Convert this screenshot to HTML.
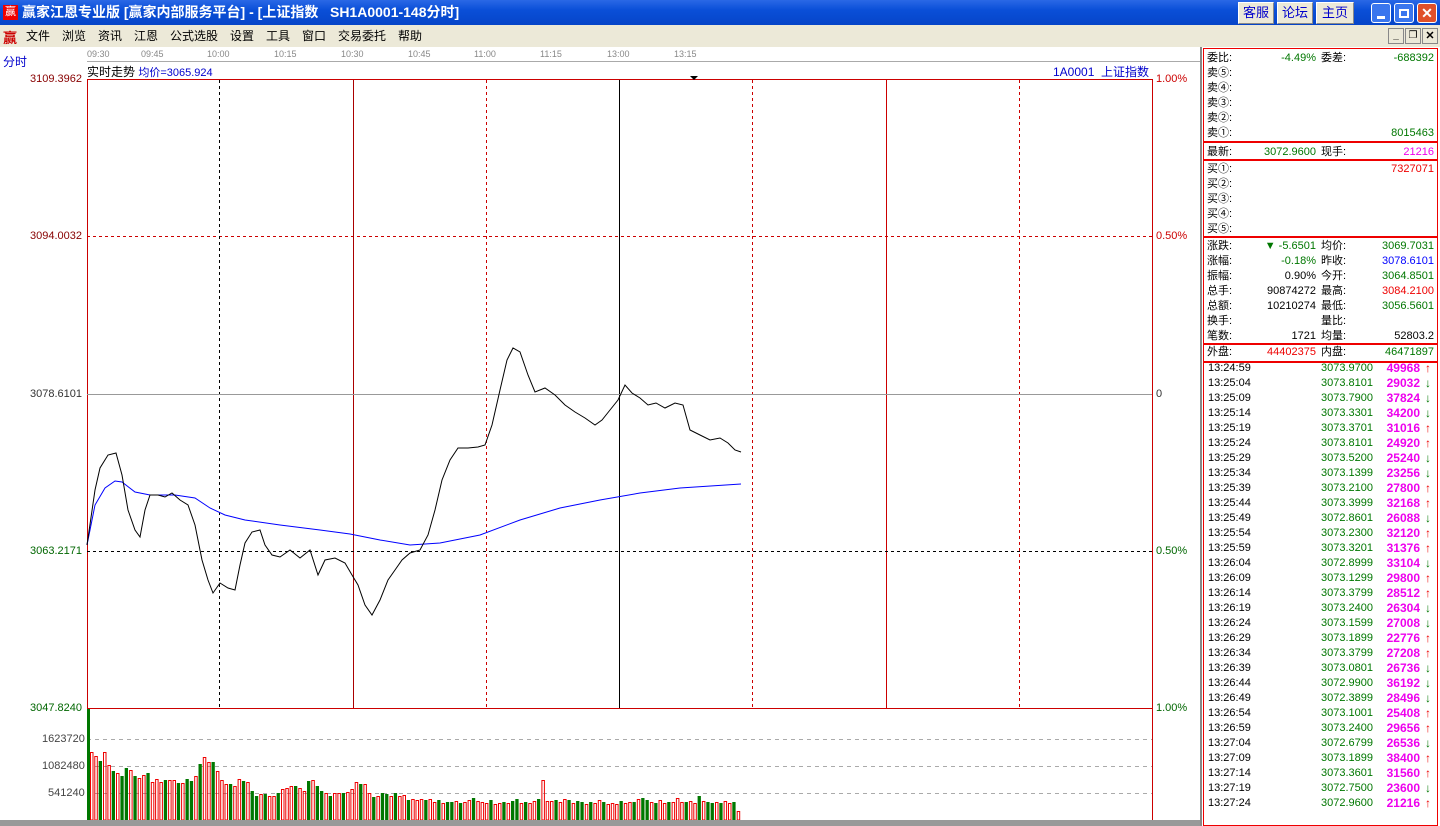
<!DOCTYPE html>
<html><head><meta charset="utf-8"><style>
*{margin:0;padding:0;box-sizing:border-box}
body{width:1440px;height:826px;overflow:hidden;background:#fff;font-family:"Liberation Sans","Noto Sans CJK SC","WenQuanYi Zen Hei",sans-serif;font-size:12px;position:relative}
.a{position:absolute;white-space:nowrap}
#title{left:0;top:0;width:1440px;height:25px;background:linear-gradient(#2a68e6,#0a4fd8 40%,#0645c8);color:#fff;font-weight:bold;font-size:14px;line-height:25px;padding-left:22px}
.tb{top:2px;height:22px;background:#ece9d8;border:1px solid #fff;border-right-color:#888;border-bottom-color:#888;color:#00c;font-size:13px;text-align:center;line-height:19px}
.wb{top:3px;width:20px;height:20px;border:1px solid #fff;border-radius:3px;background:#3a76ee}
#menu{left:0;top:25px;width:1440px;height:22px;background:#ece9d8;font-size:12px;line-height:22px}
.mi{top:25px;line-height:22px;font-size:12px}
.ax{color:#888;font-size:9px;top:49px}
.rp{font-size:11px;line-height:15px}
.box{position:absolute;border:1px solid #e00;left:1203px;width:235px}
</style></head><body>
<div id="title" class="a">赢家江恩专业版 [赢家内部服务平台] - [上证指数&nbsp;&nbsp;&nbsp;SH1A0001-148分时]</div>
<div class="a" style="left:3px;top:5px;width:15px;height:15px;background:#e00;color:#fff;font-size:11px;line-height:15px;text-align:center">赢</div>
<div class="a tb" style="left:1238px;width:36px">客服</div>
<div class="a tb" style="left:1277px;width:36px">论坛</div>
<div class="a tb" style="left:1316px;width:38px">主页</div>
<div class="a wb" style="left:1371px"><div class="a" style="left:5px;top:12px;width:8px;height:3px;background:#fff"></div></div>
<div class="a wb" style="left:1394px"><div class="a" style="left:4px;top:5px;width:10px;height:9px;border:2px solid #fff"></div></div>
<div class="a wb" style="left:1417px;background:#e0502a;color:#fff;font-weight:bold;text-align:center;line-height:18px;font-size:14px">✕</div>
<div id="menu" class="a"></div>
<div class="a" style="left:3px;top:28px;color:#c00;font-size:14px;font-weight:bold">赢</div>
<div class="a mi" style="left:26px">文件</div><div class="a mi" style="left:62px">浏览</div><div class="a mi" style="left:98px">资讯</div><div class="a mi" style="left:134px">江恩</div><div class="a mi" style="left:170px">公式选股</div><div class="a mi" style="left:230px">设置</div><div class="a mi" style="left:266px">工具</div><div class="a mi" style="left:302px">窗口</div><div class="a mi" style="left:338px">交易委托</div><div class="a mi" style="left:398px">帮助</div>
<div class="a" style="left:1388px;top:28px;width:16px;height:16px;border:1px solid #888;background:#ece9d8;font-size:10px;text-align:center;line-height:14px;font-weight:bold">_</div>
<div class="a" style="left:1405px;top:28px;width:16px;height:16px;border:1px solid #888;background:#ece9d8;font-size:10px;text-align:center;line-height:14px">❐</div>
<div class="a" style="left:1422px;top:28px;width:16px;height:16px;border:1px solid #888;background:#ece9d8;font-size:11px;text-align:center;line-height:14px;font-weight:bold">✕</div>
<div class="a" style="left:1200px;top:47px;width:2px;height:779px;background:#888"></div>
<div class="a" style="left:87px;top:61px;width:1113px;height:1px;background:#aaa"></div>
<div class="a ax" style="left:87px">09:30</div><div class="a ax" style="left:141px">09:45</div><div class="a ax" style="left:207px">10:00</div><div class="a ax" style="left:274px">10:15</div><div class="a ax" style="left:341px">10:30</div><div class="a ax" style="left:408px">10:45</div><div class="a ax" style="left:474px">11:00</div><div class="a ax" style="left:540px">11:15</div><div class="a ax" style="left:607px">13:00</div><div class="a ax" style="left:674px">13:15</div>
<div class="a" style="left:3px;top:53px;color:#00c;font-size:12px">分时</div>
<div class="a" style="left:87px;top:63px;font-size:12px">实时走势 <span style="color:#00c;font-size:11px">均价=3065.924</span></div>
<div class="a" style="left:1053px;top:63px;color:#00c;font-size:12px">1A0001&nbsp;&nbsp;上证指数</div>
<div class="a" style="left:30px;top:73px;color:#800;font-size:11px">3109.3962</div>
<div class="a" style="left:30px;top:230px;color:#800;font-size:11px">3094.0032</div>
<div class="a" style="left:30px;top:388px;color:#333;font-size:11px">3078.6101</div>
<div class="a" style="left:30px;top:545px;color:#060;font-size:11px">3063.2171</div>
<div class="a" style="left:30px;top:702px;color:#060;font-size:11px">3047.8240</div>
<div class="a" style="left:42px;top:733px;color:#444;font-size:11px">1623720</div>
<div class="a" style="left:42px;top:760px;color:#444;font-size:11px">1082480</div>
<div class="a" style="left:48px;top:787px;color:#444;font-size:11px">541240</div>
<div class="a" style="left:1156px;top:73px;color:#c00;font-size:11px">1.00%</div>
<div class="a" style="left:1156px;top:230px;color:#c00;font-size:11px">0.50%</div>
<div class="a" style="left:1156px;top:388px;color:#333;font-size:11px">0</div>
<div class="a" style="left:1156px;top:545px;color:#060;font-size:11px">0.50%</div>
<div class="a" style="left:1156px;top:702px;color:#060;font-size:11px">1.00%</div>
<svg class="a" style="left:0;top:0" width="1200" height="826">
<g stroke="#c00" stroke-width="1" fill="none" shape-rendering="crispEdges">
<rect x="87.5" y="79.5" width="1065" height="629"/>
<line x1="87" y1="236.5" x2="1152" y2="236.5" stroke-dasharray="3,3"/>
<line x1="219.5" y1="80" x2="219.5" y2="708" stroke="#000" stroke-dasharray="3,3"/>
<line x1="353.5" y1="80" x2="353.5" y2="708" stroke="#a00"/>
<line x1="486.5" y1="80" x2="486.5" y2="708" stroke-dasharray="3,3"/>
<line x1="619.5" y1="80" x2="619.5" y2="708" stroke="#000"/>
<line x1="752.5" y1="80" x2="752.5" y2="708" stroke-dasharray="3,3"/>
<line x1="886.5" y1="80" x2="886.5" y2="708"/>
<line x1="1019.5" y1="80" x2="1019.5" y2="708" stroke-dasharray="3,3"/>
<line x1="87" y1="394.5" x2="1152" y2="394.5" stroke="#999"/>
<line x1="87" y1="551.5" x2="1152" y2="551.5" stroke="#000" stroke-dasharray="3,3"/>
<line x1="87" y1="739.5" x2="1152" y2="739.5" stroke="#aaa" stroke-dasharray="4,4"/>
<line x1="87" y1="766.5" x2="1152" y2="766.5" stroke="#aaa" stroke-dasharray="4,4"/>
<line x1="87" y1="793.5" x2="1152" y2="793.5" stroke="#aaa" stroke-dasharray="4,4"/>
<line x1="87.5" y1="708" x2="87.5" y2="820"/>
<line x1="1152.5" y1="708" x2="1152.5" y2="820"/>
</g>
<polygon points="690,76 698,76 694,80" fill="#000"/>
<polyline fill="none" stroke="#00f" stroke-width="1" points="87,545 95,505 105,488 115,481 122,482 135,492 150,495 175,495 195,498 210,508 225,515 245,520 280,525 320,530 350,534 380,540 410,545 440,543 480,535 520,520 560,508 600,500 640,493 680,488 741,484"/>
<polyline fill="none" stroke="#000" stroke-width="1" points="87,545 95,490 100,468 108,455 116,453 122,475 128,510 135,530 140,537 145,510 150,495 158,495 165,497 172,493 180,500 188,505 195,525 202,560 208,580 213,593 220,583 228,588 235,590 240,565 245,543 252,532 260,530 265,545 272,555 280,557 290,550 300,558 310,550 318,575 325,560 335,558 345,563 352,575 358,585 365,605 372,615 380,600 388,580 395,570 402,560 410,553 420,550 428,535 435,510 442,480 450,460 458,448 468,448 478,447 485,445 492,425 500,390 507,360 513,348 520,352 528,375 535,392 545,388 555,395 565,405 575,412 585,418 595,425 602,420 610,410 618,400 625,385 632,393 640,398 648,405 656,403 665,408 675,403 683,405 690,430 700,435 710,440 720,438 728,443 735,450 741,452"/>
<g id="vol"></g>
<rect x="0" y="820" width="1200" height="6" fill="#999"/>
</svg>
<div class="box" style="top:48px;height:94px"></div>
<div class="box" style="top:142px;height:18px"></div>
<div class="box" style="top:160px;height:77px"></div>
<div class="box" style="top:237px;height:107px"></div>
<div class="box" style="top:344px;height:18px"></div>
<div class="box" style="top:362px;height:464px"></div>
<div id="rp"></div>
<script>
var h='';
function t(x,y,s,c,al,b){h+='<div class="a rp" style="'+(al?'right:'+(1440-x)+'px':'left:'+x+'px')+';top:'+y+'px;color:'+(c||'#000')+(b?';font-weight:bold;font-size:12px':'')+'">'+s+'</div>';}
t(1207,51,'委比:');t(1316,51,'-4.49%','#070',1);t(1321,51,'委差:');t(1434,51,'-688392','#070',1);
['卖⑤:','卖④:','卖③:','卖②:','卖①:'].forEach(function(s,i){t(1207,66+15*i,s)});t(1434,126,'8015463','#070',1);
t(1207,145,'最新:');t(1316,145,'3072.9600','#070',1);t(1321,145,'现手:');t(1434,145,'21216','#e0e',1);
['买①:','买②:','买③:','买④:','买⑤:'].forEach(function(s,i){t(1207,162+15*i,s)});t(1434,162,'7327071','#e00',1);
var L=[['涨跌:','<span style="color:#070">▼ -5.6501</span>','均价:','3069.7031','#070'],['涨幅:','<span style="color:#070">-0.18%</span>','昨收:','3078.6101','#00f'],['振幅:','0.90%','今开:','3064.8501','#070'],['总手:','90874272','最高:','3084.2100','#e00'],['总额:','10210274','最低:','3056.5601','#070'],['换手:','','量比:','',''],['笔数:','1721','均量:','52803.2','#000']];
L.forEach(function(r,i){var y=239+15*i;t(1207,y,r[0]);t(1316,y,r[1],'#000',1);t(1321,y,r[2]);t(1434,y,r[3],r[4],1)});
t(1207,345,'外盘:');t(1316,345,'44402375','#e00',1);t(1321,345,'内盘:');t(1434,345,'46471897','#070',1);
var T=[['13:24:59','3073.9700','49968',1],['13:25:04','3073.8101','29032',0],['13:25:09','3073.7900','37824',0],['13:25:14','3073.3301','34200',0],['13:25:19','3073.3701','31016',1],['13:25:24','3073.8101','24920',1],['13:25:29','3073.5200','25240',0],['13:25:34','3073.1399','23256',0],['13:25:39','3073.2100','27800',1],['13:25:44','3073.3999','32168',1],['13:25:49','3072.8601','26088',0],['13:25:54','3073.2300','32120',1],['13:25:59','3073.3201','31376',1],['13:26:04','3072.8999','33104',0],['13:26:09','3073.1299','29800',1],['13:26:14','3073.3799','28512',1],['13:26:19','3073.2400','26304',0],['13:26:24','3073.1599','27008',0],['13:26:29','3073.1899','22776',1],['13:26:34','3073.3799','27208',1],['13:26:39','3073.0801','26736',0],['13:26:44','3072.9900','36192',0],['13:26:49','3072.3899','28496',0],['13:26:54','3073.1001','25408',1],['13:26:59','3073.2400','29656',1],['13:27:04','3072.6799','26536',0],['13:27:09','3073.1899','38400',1],['13:27:14','3073.3601','31560',1],['13:27:19','3072.7500','23600',0],['13:27:24','3072.9600','21216',1]];
T.forEach(function(r,i){var y=361+15*i;t(1208,y,r[0]);t(1373,y,r[1],'#070',1);t(1420,y,r[2],'#e0e',1,1);t(1425,y,r[3]?'↑':'↓',r[3]?'#e00':'#070',0,1)});
document.getElementById('rp').innerHTML=h;
var v='<rect x="87" y="709" width="3" height="111" fill="#070"/>';
var hs=[68,64,59,68,55,49,47,44,52,50,44,42,45,47,38,41,38,40,40,40,37,37,41,39,44,56,63,58,58,49,40,36,36,34,41,39,38,29,24,26,26,24,24,27,31,32,34,34,32,29,39,40,34,29,27,24,27,27,27,28,31,38,36,36,27,23,24,27,26,24,27,24,25,20,21,20,21,20,21,18,20,17,18,18,19,17,18,20,22,19,18,17,20,16,17,18,17,19,21,17,18,17,19,21,40,19,19,20,18,21,20,17,19,18,16,18,17,20,18,16,17,16,19,17,18,18,21,22,20,18,17,20,17,18,18,22,18,18,19,17,24,19,18,17,18,17,19,17,18,9];
var st=(741-90)/hs.length;
for(var i=0;i<hs.length;i++){var x=90+i*st,hh=hs[i];var c=((i*7+3)%5<2)||(i%3==0);var y=820-hh;
v+=c?'<rect x="'+(x+0.5).toFixed(1)+'" y="'+(y+0.5).toFixed(1)+'" width="2.5" height="'+(hh-0.5).toFixed(1)+'" fill="none" stroke="#e00"/>':'<rect x="'+x.toFixed(1)+'" y="'+y.toFixed(1)+'" width="3.3" height="'+hh.toFixed(1)+'" fill="#070"/>';}
document.getElementById('vol').innerHTML=v;
</script>
</body></html>
